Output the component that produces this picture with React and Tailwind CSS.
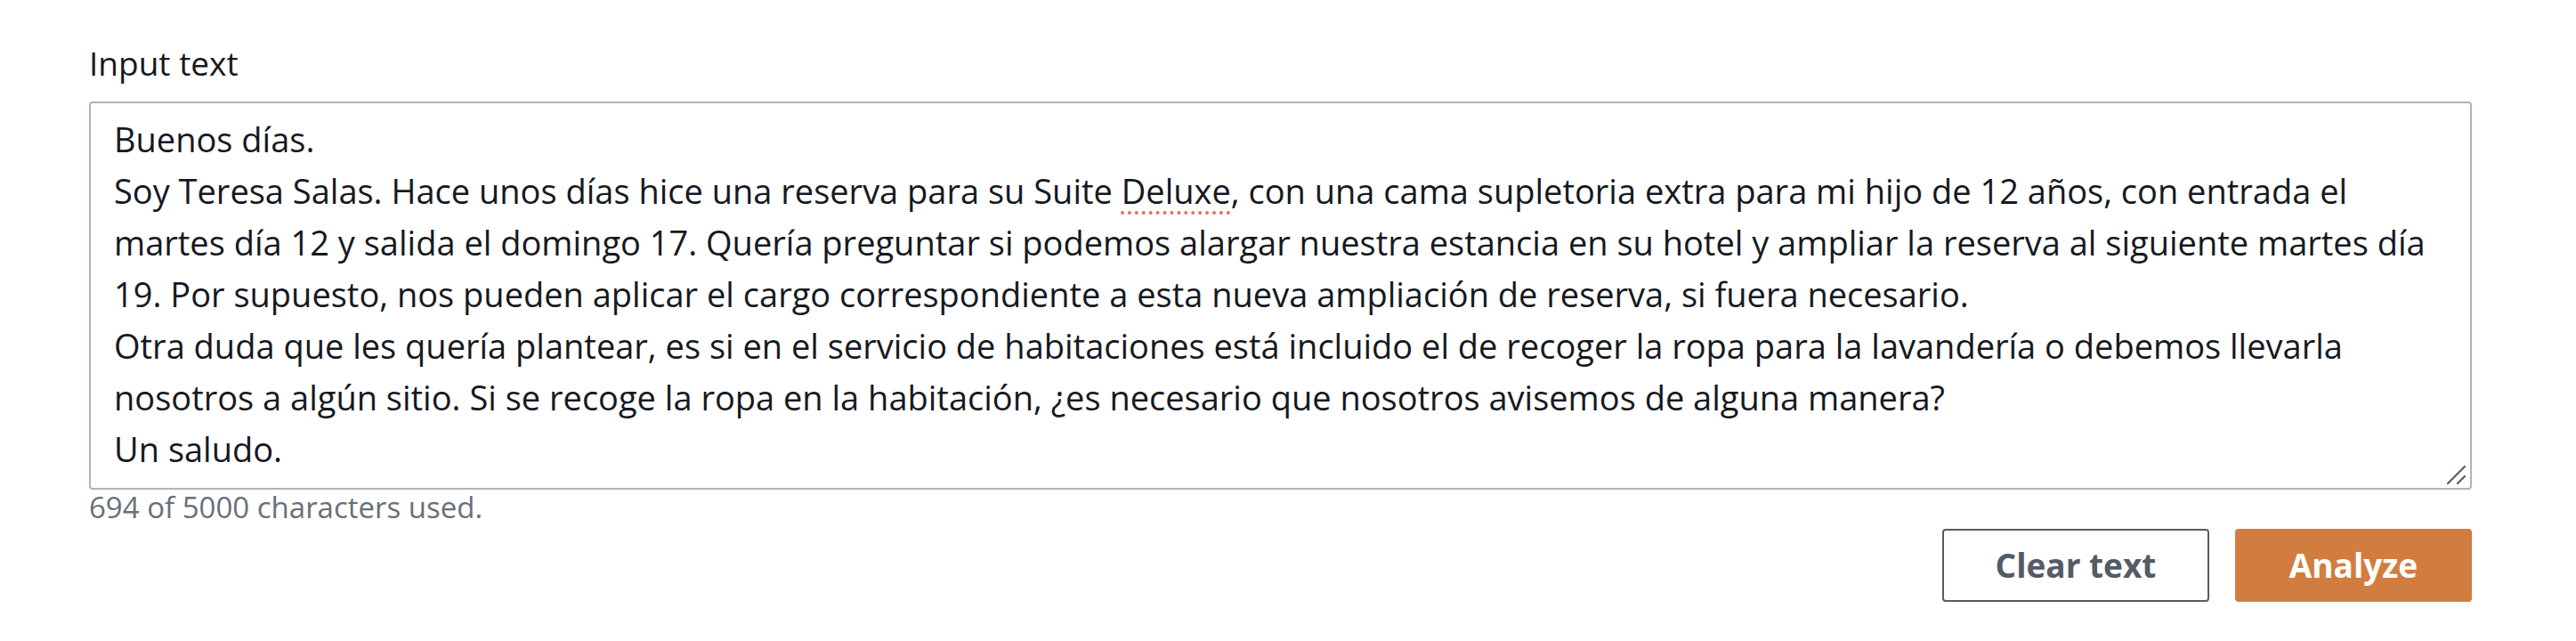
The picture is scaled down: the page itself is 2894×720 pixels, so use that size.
import React from "react";

const lines = [
  ["Buenos días."],
  [
    "Soy Teresa Salas. Hace unos días hice una reserva para su Suite ",
    "Deluxe",
    ", con una cama supletoria extra para mi hijo de 12 años, con entrada el",
  ],
  ["martes día 12 y salida el domingo 17. Quería preguntar si podemos alargar nuestra estancia en su hotel y ampliar la reserva al siguiente martes día"],
  ["19. Por supuesto, nos pueden aplicar el cargo correspondiente a esta nueva ampliación de reserva, si fuera necesario."],
  ["Otra duda que les quería plantear, es si en el servicio de habitaciones está incluido el de recoger la ropa para la lavandería o debemos llevarla"],
  ["nosotros a algún sitio. Si se recoge la ropa en la habitación, ¿es necesario que nosotros avisemos de alguna manera?"],
  ["Un saludo."],
];

export default function App() {
  return (
    <div
      className="w-[2894px] h-[720px] bg-white text-[#16191f]"
      style={{ fontFamily: '"Open Sans", "Noto Sans", sans-serif' }}
    >
      <div className="ml-[100px] w-[2677px] pt-[42px] flex flex-col">
        <div className="text-[37px] leading-[58px] mb-[14px]">Input text</div>
        <div className="relative h-[436px] border-2 border-[#aab7b8] rounded-[4px] pl-[26px] pt-[11px]">
          {lines.map((parts, i) => (
            <div key={i} className="text-[38px] leading-[58px] whitespace-pre">
              {parts.length === 1 ? (
                parts[0]
              ) : (
                <>
                  {parts[0]}
                  <span className="underline decoration-dotted decoration-[#e0735f] decoration-[4px] underline-offset-[8px]">
                    {parts[1]}
                  </span>
                  {parts[2]}
                </>
              )}
            </div>
          ))}
          <svg
            className="absolute right-[3px] bottom-[3px]"
            width="24"
            height="24"
            viewBox="0 0 24 24"
          >
            <line x1="2" y1="22" x2="21" y2="3" stroke="#545b64" strokeWidth="2.2" strokeLinecap="round" />
            <line x1="13" y1="22" x2="21" y2="14" stroke="#545b64" strokeWidth="2.2" strokeLinecap="round" />
          </svg>
        </div>
        <div className="text-[33px] leading-[40px] text-[#687078]">694 of 5000 characters used.</div>
        <div className="flex justify-end gap-[29px] mt-[4px]">
          <button className="h-[82px] w-[300px] border-2 border-[#545b64] rounded-[4px] bg-white text-[#545b64] text-[37px] font-bold flex items-center justify-center">
            Clear text
          </button>
          <button className="h-[82px] w-[266px] rounded-[4px] bg-[#d27d40] text-white text-[37px] font-bold flex items-center justify-center">
            Analyze
          </button>
        </div>
      </div>
    </div>
  );
}
